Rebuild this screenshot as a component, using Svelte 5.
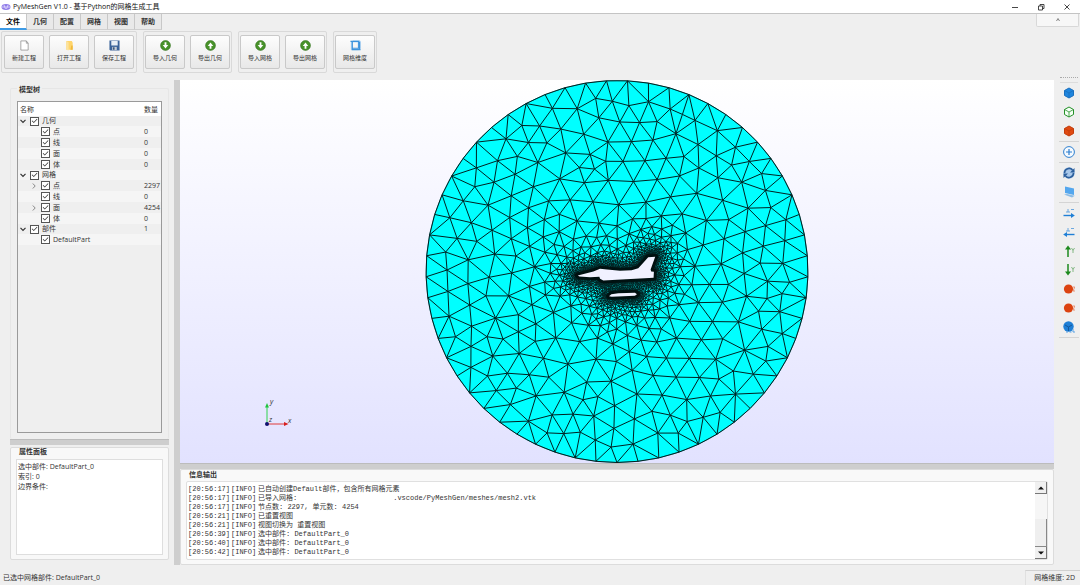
<script lang='ts'>
  type Point = [number, number]

  interface TreeRow {
    name: string
    count: string
    level: number
    arrow?: 'open' | 'closed'
  }

  const tabs = ['文件', '几何', '配置', '网格', '视图', '帮助']
  let activeTab = $state('文件')

  const toolGroups = [
    [
      { label: '新建工程', icon: 'new' },
      { label: '打开工程', icon: 'open' },
      { label: '保存工程', icon: 'save' },
    ],
    [
      { label: '导入几何', icon: 'down' },
      { label: '导出几何', icon: 'up' },
    ],
    [
      { label: '导入网格', icon: 'down' },
      { label: '导出网格', icon: 'up' },
    ],
    [{ label: '网格维度', icon: 'dimension' }],
  ]

  const tree: TreeRow[] = [
    { name: '几何', count: '', level: 0, arrow: 'open' },
    { name: '点', count: '0', level: 1 },
    { name: '线', count: '0', level: 1 },
    { name: '面', count: '0', level: 1 },
    { name: '体', count: '0', level: 1 },
    { name: '网格', count: '', level: 0, arrow: 'open' },
    { name: '点', count: '2297', level: 1, arrow: 'closed' },
    { name: '线', count: '0', level: 1 },
    { name: '面', count: '4254', level: 1, arrow: 'closed' },
    { name: '体', count: '0', level: 1 },
    { name: '部件', count: '1', level: 0, arrow: 'open' },
    { name: 'DefaultPart', count: '', level: 1 },
  ]

  const logs = [
    { time: '20:56:17', text: '已自动创建Default部件，包含所有网格元素' },
    { time: '20:56:17', text: '已导入网格:', path: '.vscode/PyMeshGen/meshes/mesh2.vtk' },
    { time: '20:56:17', text: '节点数: 2297, 单元数: 4254' },
    { time: '20:56:21', text: '已重置视图' },
    { time: '20:56:21', text: '视图切换为 重置视图' },
    { time: '20:56:39', text: '选中部件: DefaultPart_0' },
    { time: '20:56:40', text: '选中部件: DefaultPart_0' },
    { time: '20:56:42', text: '选中部件: DefaultPart_0' },
  ]

  const viewTools = [
    ['surface', 'wireframe', 'mixed'],
    ['fit'],
    ['reset', 'background'],
    ['x+', 'x-', 'y+', 'y-', 'z+', 'z-', 'iso'],
  ]

  // outlines in mesh units, origin at the centre of the far field
  const aircraft: Point[] = [
    [-39.3, 4], [-23.7, 0], [-17, -2.7], [-10, -2], [3, -0.7], [14.7, -1.3],
    [21.3, -3.3], [25.7, -8], [31.3, -14.3], [38.3, -14.7], [33.7, -2],
    [34.3, 0], [37, 0.3], [36.7, 6.3], [23, 7], [-0.3, 8.3], [-13.7, 9],
    [-17, 7.3], [-17.7, 5.3], [-27, 5.7], [-37.7, 5],
  ]
  const store: Point[] = [
    [-8, 24.7], [-5.7, 22.7], [1.3, 21.7], [18, 21.3], [20, 22.7], [18, 24.3], [-5.3, 25.3],
  ]
  const bodies = [aircraft, store]
  const radius = 191.5

  function distanceTo(x: number, y: number) {
    let best = Infinity
    for (const body of bodies) {
      for (let i = 0; i < body.length; i++) {
        const [ax, ay] = body[i]
        const [bx, by] = body[(i + 1) % body.length]
        const dx = bx - ax
        const dy = by - ay
        const t = Math.max(0, Math.min(1, ((x - ax) * dx + (y - ay) * dy) / (dx * dx + dy * dy)))
        best = Math.min(best, Math.hypot(x - ax - t * dx, y - ay - t * dy))
      }
    }
    return best
  }

  function sizeAt(x: number, y: number) {
    const d = distanceTo(x, y)
    return Math.min(20, 0.9 + 0.17 * d + 0.0035 * d * d)
  }

  function inside(x: number, y: number, body: Point[]) {
    let hit = false
    for (let i = 0, j = body.length - 1; i < body.length; j = i++) {
      const [ax, ay] = body[i]
      const [bx, by] = body[j]
      if (ay > y !== by > y && x < ((bx - ax) * (y - ay)) / (by - ay) + ax) hit = !hit
    }
    return hit
  }

  // Bowyer-Watson
  function triangulate(points: Point[]) {
    const n = points.length
    const all: Point[] = [...points, [-2000, -1500], [2000, -1500], [0, 2500]]
    const make = (a: number, b: number, c: number) => {
      const [ax, ay] = all[a]
      const bx = all[b][0] - ax
      const by = all[b][1] - ay
      const cx = all[c][0] - ax
      const cy = all[c][1] - ay
      const d = 2 * (bx * cy - by * cx) || 1e-9
      const ux = (cy * (bx * bx + by * by) - by * (cx * cx + cy * cy)) / d
      const uy = (bx * (cx * cx + cy * cy) - cx * (bx * bx + by * by)) / d
      return { a, b, c, x: ax + ux, y: ay + uy, r: ux * ux + uy * uy }
    }
    let triangles = [make(n, n + 1, n + 2)]
    for (let i = 0; i < n; i++) {
      const [x, y] = all[i]
      const edges = new Map<number, [number, number]>()
      const toggle = (p: number, q: number) => {
        const key = Math.min(p, q) * 100000 + Math.max(p, q)
        if (edges.has(key)) edges.delete(key)
        else edges.set(key, [p, q])
      }
      const kept = []
      for (const t of triangles) {
        if ((t.x - x) ** 2 + (t.y - y) ** 2 < t.r) {
          toggle(t.a, t.b)
          toggle(t.b, t.c)
          toggle(t.c, t.a)
        } else {
          kept.push(t)
        }
      }
      for (const [p, q] of edges.values()) kept.push(make(p, q, i))
      triangles = kept
    }
    const edges = new Map<number, [number, number]>()
    for (const t of triangles) {
      for (const [p, q] of [[t.a, t.b], [t.b, t.c], [t.c, t.a]]) {
        if (p < n && q < n) edges.set(Math.min(p, q) * 100000 + Math.max(p, q), [p, q])
      }
    }
    return [...edges.values()]
  }

  function buildMesh() {
    let seed = 11
    const random = () => {
      seed = (seed * 16807) % 2147483647
      return seed / 2147483647
    }
    const points: Point[] = []
    for (const body of bodies) {
      body.forEach(([ax, ay], i) => {
        const [bx, by] = body[(i + 1) % body.length]
        const steps = Math.max(1, Math.round(Math.hypot(bx - ax, by - ay)))
        for (let s = 0; s < steps; s++) {
          points.push([ax + ((bx - ax) * s) / steps, ay + ((by - ay) * s) / steps])
        }
      })
    }
    for (let i = 0; i < 57; i++) {
      const angle = Math.PI / 2 + (i * 2 * Math.PI) / 57
      points.push([radius * Math.cos(angle), radius * Math.sin(angle)])
    }
    const fixed = points.length

    // grow nodes outwards from the walls
    for (let i = 0; i < points.length && points.length < 4000; i++) {
      const [px, py] = points[i]
      const h = sizeAt(px, py)
      const start = Math.atan2(-py, -px) + (random() - 0.5) * 0.3
      for (let k = 0; k < 6; k++) {
        const angle = start + (k * Math.PI) / 3
        const x = px + h * Math.cos(angle)
        const y = py + h * Math.sin(angle)
        const near = 0.8 * sizeAt(x, y)
        if (Math.hypot(x, y) > radius - near * 0.8) continue
        if (bodies.some(body => inside(x, y, body))) continue
        if (points.some(q => (q[0] - x) ** 2 + (q[1] - y) ** 2 < near * near)) continue
        points.push([x, y])
      }
    }

    let edges = triangulate(points)
    for (let pass = 0; pass < 3; pass++) {
      const sums = points.map(() => [0, 0, 0])
      for (const [p, q] of edges) {
        for (const [from, to] of [[p, q], [q, p]]) {
          sums[to][0] += points[from][0]
          sums[to][1] += points[from][1]
          sums[to][2]++
        }
      }
      for (let i = fixed; i < points.length; i++) {
        points[i] = [sums[i][0] / sums[i][2], sums[i][1] / sums[i][2]]
      }
      edges = triangulate(points)
    }
    return edges
      .map(([p, q]) => `M${points[p].map(v => v.toFixed(1))}L${points[q].map(v => v.toFixed(1))}`)
      .join('')
  }

  const meshPath = buildMesh()
</script>

{#snippet cube(fill: string, line: string)}
  <path d='M6 1 10.500 3.500V8.500L6 11 1.500 8.500V3.500Z' {fill} stroke={line} />
  <path d='M1.500 3.500 6 6 10.500 3.500M6 6V11' fill='none' stroke={line} stroke-width='0.8' />
{/snippet}

<div class='window'>
  <header class='titlebar'>
    <svg class='logo' viewBox='0 0 10 10'>
      <ellipse cx='5' cy='5' rx='4.500' ry='3' fill='#8f7be8' />
      <path d='M1 5H9M3 3 4.500 7M7 3 5.500 7' stroke='#e6e0ff' stroke-width='0.8' fill='none' />
    </svg>
    <h1>PyMeshGen V1.0 - 基于Python的网格生成工具</h1>
    <div class='controls'>
      <button type='button' aria-label='最小化'>
        <svg viewBox='0 0 8 8'><path d='M1 4.500H7' /></svg>
      </button>
      <button type='button' aria-label='还原'>
        <svg viewBox='0 0 8 8'><path d='M1.500 3H5.500V7H1.500ZM3 3V1.500H7V5.500H5.500' /></svg>
      </button>
      <button type='button' aria-label='关闭'>
        <svg viewBox='0 0 8 8'><path d='M1.500 1.500 6.500 6.500M6.500 1.500 1.500 6.500' /></svg>
      </button>
    </div>
  </header>

  <nav class='tabs'>
    {#each tabs as tab (tab)}
      <button
        class='tab'
        class:active={activeTab === tab}
        onclick={() => activeTab = tab}
        type='button'
      >{tab}</button>
    {/each}
    <button class='collapse' type='button' aria-label='折叠'>
      <svg viewBox='0 0 6 6'><path d='M1.500 4 3 1.500 4.500 4' /></svg>
    </button>
  </nav>

  <div class='ribbon'>
    {#each toolGroups as group}
      <div class='tool-group'>
        {#each group as tool (tool.label)}
          <button class='tool' type='button'>
            <svg viewBox='0 0 12 12'>
              {#if tool.icon === 'new'}
                <path d='M2 1H8L10 3.500V11H2Z' fill='#fff' stroke='#8a8a8a' stroke-width='0.8' />
                <path d='M8 1V3.500H10' fill='none' stroke='#8a8a8a' stroke-width='0.8' />
              {:else if tool.icon === 'open'}
                <path d='M2.500 1H8.500L9.500 3V10.500H2.500Z' fill='#ffd56b' />
                <path d='M2.500 1 5 2.500V11.500L2.500 10.500Z' fill='#fbe3a0' />
                <path d='M8 6H9.500V10.500H7Z' fill='#f0b83c' />
              {:else if tool.icon === 'save'}
                <path d='M0.500 0.500H11.500V11.500H1.500L0.500 10.500Z' fill='#3a6299' />
                <path d='M2.500 1H9.500V6H2.500Z' fill='#e8eff7' />
                <path d='M3.500 7.500H8.500V11H3.500Z' fill='#c5ccd6' />
                <path d='M4.500 8H6V10.500H4.500Z' fill='#26456f' />
              {:else if tool.icon === 'dimension'}
                <path d='M1.500 2H9V10.500H1.500ZM3 1H11V9.500' fill='none' stroke='#9fcdf3' />
                <path d='M0.500 1.500H9.500V9.500M2.500 2V10.500H11.500M2.500 9H9.500M10.500 2V11' fill='none' stroke='#3d93dc' stroke-width='1.300' />
              {:else}
                <circle cx='6' cy='6' r='5.400' fill='#48922a' stroke='#2f6f1b' stroke-width='0.6' />
                <path
                  d={tool.icon === 'down' ? 'M5 2.500H7V5.500H9L6 9.200 3 5.500H5Z' : 'M5 9.500H7V6.500H9L6 2.800 3 6.500H5Z'}
                  fill='#fff'
                />
              {/if}
            </svg>
            <span>{tool.label}</span>
          </button>
        {/each}
      </div>
    {/each}
  </div>

  <main class='workspace'>
    <aside class='sidebar'>
      <section class='group model'>
        <h2>模型树</h2>
        <div class='tree'>
          <table>
            <thead>
              <tr><th>名称</th><th class='count'>数量</th></tr>
            </thead>
            <tbody>
              {#each tree as row}
                <tr class:parent={row.level === 0}>
                  <td>
                    <div class='node' class:child={row.level === 1}>
                      <svg class='arrow' viewBox='0 0 8 8'>
                        {#if row.arrow === 'open'}
                          <path d='M1.500 2.800 4 5.300 6.500 2.800' stroke='#333' stroke-width='1.200' />
                        {:else if row.arrow === 'closed'}
                          <path d='M2.800 1.500 5.200 4 2.800 6.500' stroke='#888' />
                        {/if}
                      </svg>
                      <label><input type='checkbox' checked />{row.name}</label>
                    </div>
                  </td>
                  <td class='count'>{row.count}</td>
                </tr>
              {/each}
            </tbody>
          </table>
        </div>
      </section>
      <div class='handle'></div>
      <section class='group props'>
        <h2>属性面板</h2>
        <div class='props-text'>
          <p>选中部件: DefaultPart_0</p>
          <p>索引: 0</p>
          <p>边界条件:</p>
        </div>
      </section>
    </aside>

    <div class='handle vertical'></div>

    <div class='center'>
      <div class='viewport'>
        <svg class='mesh' viewBox='-192 -192 384 384'>
          <circle r={radius} fill='#0ff' stroke='#066' stroke-width='0.5' />
          <path d={meshPath} fill='none' stroke='#002020' />
          {#each bodies as body}
            <polygon class='halo' points={body.join(' ')} />
          {/each}
          {#each bodies as body}
            <polygon points={body.join(' ')} fill='#f1f1ff' />
          {/each}
        </svg>
        <svg class='axes' viewBox='0 0 40 40'>
          <path d='M9 30V12' stroke='#2fd24f' />
          <path d='M7 13.500 9 9 11 13.500Z' fill='#1fc43f' />
          <path d='M9 30H27' stroke='#e03a3a' />
          <path d='M26 28 30.500 30 26 32Z' fill='#d81e1e' />
          <circle cx='9' cy='30' r='2' fill='#101070' />
          <text x='12' y='10'>y</text>
          <text x='30' y='29'>x</text>
          <text x='11' y='28'>z</text>
        </svg>
      </div>
      <div class='handle'></div>
      <section class='group output'>
        <h2>信息输出</h2>
        <div class='log'>
          <div class='lines'>
            {#each logs as line}
              <div class='line'>
                <span>[{line.time}]</span>
                <span>[INFO]</span>
                <span>{line.text}{#if line.path}<span class='path'>{line.path}</span>{/if}</span>
              </div>
            {/each}
          </div>
          <div class='scrollbar'>
            <button type='button' aria-label='向上滚动'>
              <svg viewBox='0 0 6 6'><path d='M0 4.500 3 1.500 6 4.500Z' /></svg>
            </button>
            <div class='thumb'></div>
            <button type='button' aria-label='向下滚动'>
              <svg viewBox='0 0 6 6'><path d='M0 1.500 3 4.500 6 1.500Z' /></svg>
            </button>
          </div>
        </div>
      </section>
    </div>

    <aside class='view-tools'>
      <div class='grip'></div>
      {#each viewTools as group}
        <div class='view-group'>
          {#each group as tool (tool)}
            <button type='button' aria-label={tool}>
              <svg viewBox='0 0 12 12'>
                {#if tool === 'surface'}
                  {@render cube('#1f86de', '#1a6fbe')}
                {:else if tool === 'wireframe'}
                  {@render cube('#f4fff4', '#249028')}
                {:else if tool === 'mixed'}
                  {@render cube('#e04a12', '#c23c0a')}
                {:else if tool === 'fit'}
                  <circle cx='6' cy='6' r='5.400' fill='#f5faff' stroke='#2e7fcf' />
                  <path d='M6 3V9M3 6H9' stroke='#2e7fcf' stroke-width='1.200' />
                {:else if tool === 'reset'}
                  <circle cx='6' cy='6' r='5.800' fill='#a9c8ea' />
                  <path d='M1.500 6C1.500 1.500 7 0 9.500 3M10.500 6C10.500 10.500 5 12 2.500 9' fill='none' stroke='#2c5f9c' stroke-width='1.600' />
                  <path d='M11.500 1V5.500H7ZM0.500 11V6.500H5Z' fill='#2c5f9c' />
                {:else if tool === 'background'}
                  <path d='M2 0.500 11 2.500V9L2 7Z' fill='#54a7ee' />
                  <path d='M1 8.500 4 8 11.800 9.800 9 11.500Z' fill='#8bbce6' />
                {:else if tool === 'x+' || tool === 'x-'}
                  <path d={tool === 'x+' ? 'M0.500 8.500H9' : 'M3 8.500H11.500'} stroke='#1f7fd6' stroke-width='1.400' />
                  <path d={tool === 'x+' ? 'M8 6 11.800 8.500 8 11Z' : 'M4 6 0.200 8.500 4 11Z'} fill='#1f7fd6' />
                  <path d='M3 5H7M5 2V5M8 2.500H11' stroke='#5c9fdc' stroke-width='0.9' />
                {:else if tool === 'y+' || tool === 'y-'}
                  <path d={tool === 'y+' ? 'M5 2V12' : 'M5 0V10'} stroke='#1d8a1d' stroke-width='1.500' />
                  <path d={tool === 'y+' ? 'M2 4.500 5 0.500 8 4.500Z' : 'M2 7.500 5 11.500 8 7.500Z'} fill='#1d8a1d' />
                  <path d='M8.500 3 10 5.500 11.500 3M10 5.500V8' fill='none' stroke='#69a969' stroke-width='0.8' />
                {:else if tool === 'z+' || tool === 'z-'}
                  <circle cx='5.500' cy='6' r='4.600' fill='#dc4310' />
                  <path d='M10 4H11.800L10 8H12' fill='none' stroke='#e98866' stroke-width='0.9' />
                {:else}
                  <circle cx='5.500' cy='5.500' r='5.200' fill='#1f7fd6' />
                  <path d='M2 4 5.500 6 9 4M5.500 6V10' fill='none' stroke='#14589b' />
                  <path d='M3 11H5M6.500 11H8.500M10 8V11H12' fill='none' stroke='#5ba2e4' />
                {/if}
              </svg>
            </button>
          {/each}
        </div>
      {/each}
    </aside>
  </main>

  <footer class='status'>
    <span>已选中网格部件: DefaultPart_0</span>
    <span class='dimension'>网格维度: 2D</span>
  </footer>
</div>

<style>
  :global(body) {
    margin: 0;
  }

  .window {
    display: flex;
    flex-direction: column;
    height: 100vh;
    background: #efefef;
    color: #333;
    font: 7px/11px 'Open Sans', 'Noto Sans CJK SC', sans-serif;
  }

  .window * {
    box-sizing: border-box;
  }

  button {
    padding: 0;
    border: none;
    background: none;
    color: inherit;
    font: inherit;
    cursor: pointer;
  }

  svg {
    display: block;
  }

  h1,
  h2,
  p {
    margin: 0;
    font-size: inherit;
  }

  .titlebar {
    display: flex;
    align-items: center;
    height: 14px;
    padding-left: 1px;
    border-bottom: 1px solid #c4c4c4;
    background: #fff;
    color: #111;
  }

  .titlebar .logo {
    width: 10px;
    height: 10px;
    margin-right: 2px;
  }

  .titlebar h1 {
    font-weight: 400;
  }

  .controls {
    display: flex;
    margin-left: auto;
  }

  .controls button {
    display: grid;
    place-items: center;
    width: 26px;
    height: 13px;
  }

  .controls svg {
    width: 8px;
    height: 8px;
    fill: none;
    stroke: #333;
    stroke-width: 0.9;
  }

  .tabs {
    display: flex;
    height: 16px;
  }

  .tab {
    width: 27px;
    border-right: 1px solid #c8c8c8;
    border-bottom: 1px solid #d0d0d0;
    background: #e9e9e9;
    font-weight: 700;
  }

  .tab.active {
    border-bottom: 2px solid #3d9be6;
    background: #fff;
    color: #000;
  }

  .collapse {
    display: grid;
    place-items: center;
    width: 43px;
    height: 13px;
    margin: 0 1px 0 auto;
    border: 1px solid #d8d8d8;
    border-top: none;
    border-radius: 0 0 2px 2px;
    background: #f7f7f7;
  }

  .collapse svg {
    width: 6px;
    height: 6px;
    fill: none;
    stroke: #777;
    stroke-width: 0.9;
  }

  .ribbon {
    display: flex;
    gap: 6px;
    padding: 1px;
  }

  .tool-group {
    display: flex;
    gap: 5px;
    padding: 3px 2px;
    border: 1px solid #d9d9d9;
    border-radius: 2px;
  }

  .tool-group + .tool-group {
    padding: 3px 1px;
  }

  .tool {
    display: flex;
    flex-direction: column;
    align-items: center;
    justify-content: center;
    gap: 2px;
    width: 40px;
    height: 34px;
    border: 1px solid #c9c9c9;
    border-radius: 2px;
    background: linear-gradient(#fdfdfd, #e8e8e8);
    font-size: 6px;
  }

  .tool svg {
    width: 11px;
    height: 11px;
  }

  .workspace {
    display: flex;
    flex: 1;
    min-height: 0;
    padding-left: 10px;
  }

  .sidebar {
    display: flex;
    flex-direction: column;
    width: 159px;
    padding: 14px 0 5px;
  }

  .handle {
    flex: none;
    height: 6px;
    border-top: 1px solid #bcbcbc;
    background: #cecece;
  }

  .handle.vertical {
    width: 6px;
    height: auto;
    margin: 6px 0 0 5px;
    border: none;
  }

  .group {
    display: flex;
    flex-direction: column;
    border: 1px solid #dcdcdc;
    border-radius: 2px;
    background: #f8f8f8;
  }

  .group h2 {
    align-self: flex-start;
    padding: 0 2px;
    margin-left: 6px;
    line-height: 9px;
  }

  .model {
    flex: 1;
    min-height: 0;
    padding: 0 6px 6px;
    border-color: #e6e6e6;
    border-bottom: none;
    background: #efefef;
  }

  .model h2 {
    margin: -4px 0 7px;
    background: #efefef;
  }

  .tree {
    flex: 1;
    min-height: 0;
    border: 1px solid #9a9a9a;
    background: #efefef;
  }

  table {
    width: 100%;
    border-collapse: collapse;
  }

  th {
    height: 14px;
    padding: 0 0 0 2px;
    background: #fff;
    font-weight: 400;
    text-align: left;
  }

  td {
    padding: 0;
    line-height: 11px;
  }

  .parent td {
    line-height: 10px;
  }

  th.count,
  td.count {
    width: 17px;
    padding-left: 0;
  }

  tbody tr:nth-child(even) {
    background: #f5f5f5;
  }

  .node {
    display: flex;
    align-items: center;
    height: 11px;
    padding-left: 1px;
  }

  .parent .node {
    height: 10px;
  }

  .node.child {
    padding-left: 12px;
  }

  .arrow {
    width: 8px;
    height: 8px;
    margin-right: 3px;
    fill: none;
  }

  .node label {
    display: flex;
    align-items: center;
    gap: 3px;
  }

  input {
    display: grid;
    place-items: center;
    width: 9px;
    height: 9px;
    margin: 0;
    border: 1px solid #555;
    background: #fff;
    appearance: none;
  }

  input:checked::before {
    width: 7px;
    height: 7px;
    background: #333;
    clip-path: polygon(10% 50%, 18% 42%, 40% 64%, 84% 18%, 92% 26%, 40% 80%);
    content: '';
  }

  .props {
    height: 113px;
    padding: 0 5px 4px;
    margin-top: 2px;
  }

  .props h2 {
    margin: -1px 0 3px 1px;
  }

  .props-text {
    flex: 1;
    padding: 2px 1px;
    border: 1px solid #dedede;
    background: #fff;
    line-height: 10px;
  }

  .center {
    display: flex;
    flex: 1;
    flex-direction: column;
    min-width: 0;
    margin-top: 6px;
  }

  .viewport {
    position: relative;
    flex: 1;
    min-height: 0;
    background: linear-gradient(#fff, #e2e2ff);
  }

  .mesh {
    width: 100%;
    height: 100%;
  }

  .halo {
    fill: none;
    stroke: #000c0c;
    stroke-linejoin: round;
    stroke-opacity: 0.8;
    stroke-width: 6;
  }

  .axes {
    position: absolute;
    bottom: 29px;
    left: 78px;
    width: 40px;
    height: 40px;
  }

  .axes text {
    fill: #333;
    font-size: 7px;
    font-style: italic;
  }

  .output {
    padding: 0 5px 4px;
    background: #f9f9f9;
  }

  .output h2 {
    margin-left: 1px;
  }

  .log {
    display: flex;
    height: 79px;
    margin-top: 2px;
    border: 1px solid #e0e0e0;
    border-radius: 2px;
    background: #fff;
    font: 7px/9px 'Liberation Mono', 'Noto Sans CJK SC', monospace;
  }

  .lines {
    flex: 1;
    padding: 3px 1px 2px;
  }

  .line {
    display: grid;
    grid-template-columns: 43px 27px 1fr;
    height: 9px;
    white-space: nowrap;
  }

  .path {
    margin-left: 96px;
  }

  .scrollbar {
    display: flex;
    flex-direction: column;
    width: 12px;
    background: #f6f6f6;
  }

  .scrollbar button {
    display: grid;
    place-items: center;
    height: 12px;
    border-right: 1px solid #777;
    border-bottom: 1px solid #777;
    background: #f0f0f0;
  }

  .scrollbar svg {
    width: 6px;
    height: 6px;
    fill: #111;
  }

  .thumb {
    height: 28px;
    margin-top: auto;
    border-right: 1px solid #888;
    border-bottom: 1px solid #888;
    background: #efefef;
  }

  .view-tools {
    width: 20px;
    padding-top: 2px;
    margin: 0 1px 0 5px;
  }

  .grip {
    height: 6px;
    border-top: 1px dotted #aaa;
    border-bottom: 1px solid #dcdcdc;
    margin: 1px 1px 0;
  }

  .view-group {
    padding-bottom: 1px;
    border-bottom: 1px solid #d4d4d4;
  }

  .view-group button {
    display: grid;
    place-items: center;
    width: 20px;
    height: 19px;
  }

  .view-group svg {
    width: 12px;
    height: 12px;
  }

  .status {
    display: flex;
    align-items: flex-end;
    justify-content: space-between;
    height: 20px;
    padding-left: 3px;
  }

  .status span {
    line-height: 14px;
  }

  .status .dimension {
    padding: 0 5px 0 8px;
    border-top: 1px solid #d0d0d0;
    border-left: 1px solid #e0e0e0;
  }
</style>
